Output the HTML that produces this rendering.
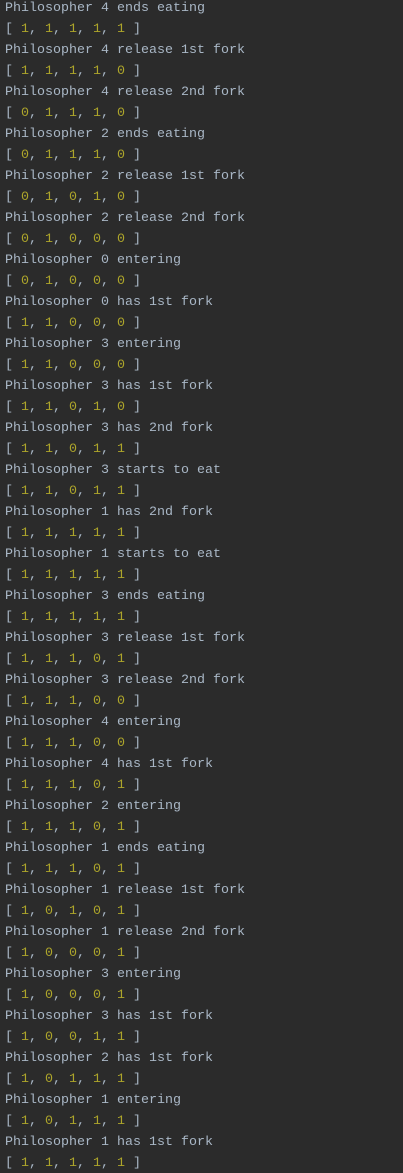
<!DOCTYPE html>
<html><head><meta charset="utf-8"><style>
html,body{margin:0;padding:0;background:#2b2b2b;width:403px;height:1173px;overflow:hidden}
pre{margin:0;padding:0 0 0 5px;position:relative;top:-2px;font-family:"Liberation Mono",monospace;font-size:13.33px;line-height:21px;color:#a9b7c6}
b{font-weight:normal;color:#ada52b}
</style></head><body><pre id="o"></pre>
<script>
var d=[["4 ends eating","11111"],["4 release 1st fork","11110"],["4 release 2nd fork","01110"],["2 ends eating","01110"],["2 release 1st fork","01010"],["2 release 2nd fork","01000"],["0 entering","01000"],["0 has 1st fork","11000"],["3 entering","11000"],["3 has 1st fork","11010"],["3 has 2nd fork","11011"],["3 starts to eat","11011"],["1 has 2nd fork","11111"],["1 starts to eat","11111"],["3 ends eating","11111"],["3 release 1st fork","11101"],["3 release 2nd fork","11100"],["4 entering","11100"],["4 has 1st fork","11101"],["2 entering","11101"],["1 ends eating","11101"],["1 release 1st fork","10101"],["1 release 2nd fork","10001"],["3 entering","10001"],["3 has 1st fork","10011"],["2 has 1st fork","10111"],["1 entering","10111"],["1 has 1st fork","11111"]];
var h="";d.forEach(function(x){h+="Philosopher "+x[0]+"\n[ "+x[1].split("").map(function(c){return "<b>"+c+"</b>"}).join(", ")+" ]\n";});
document.getElementById("o").innerHTML=h;
</script></body></html>
